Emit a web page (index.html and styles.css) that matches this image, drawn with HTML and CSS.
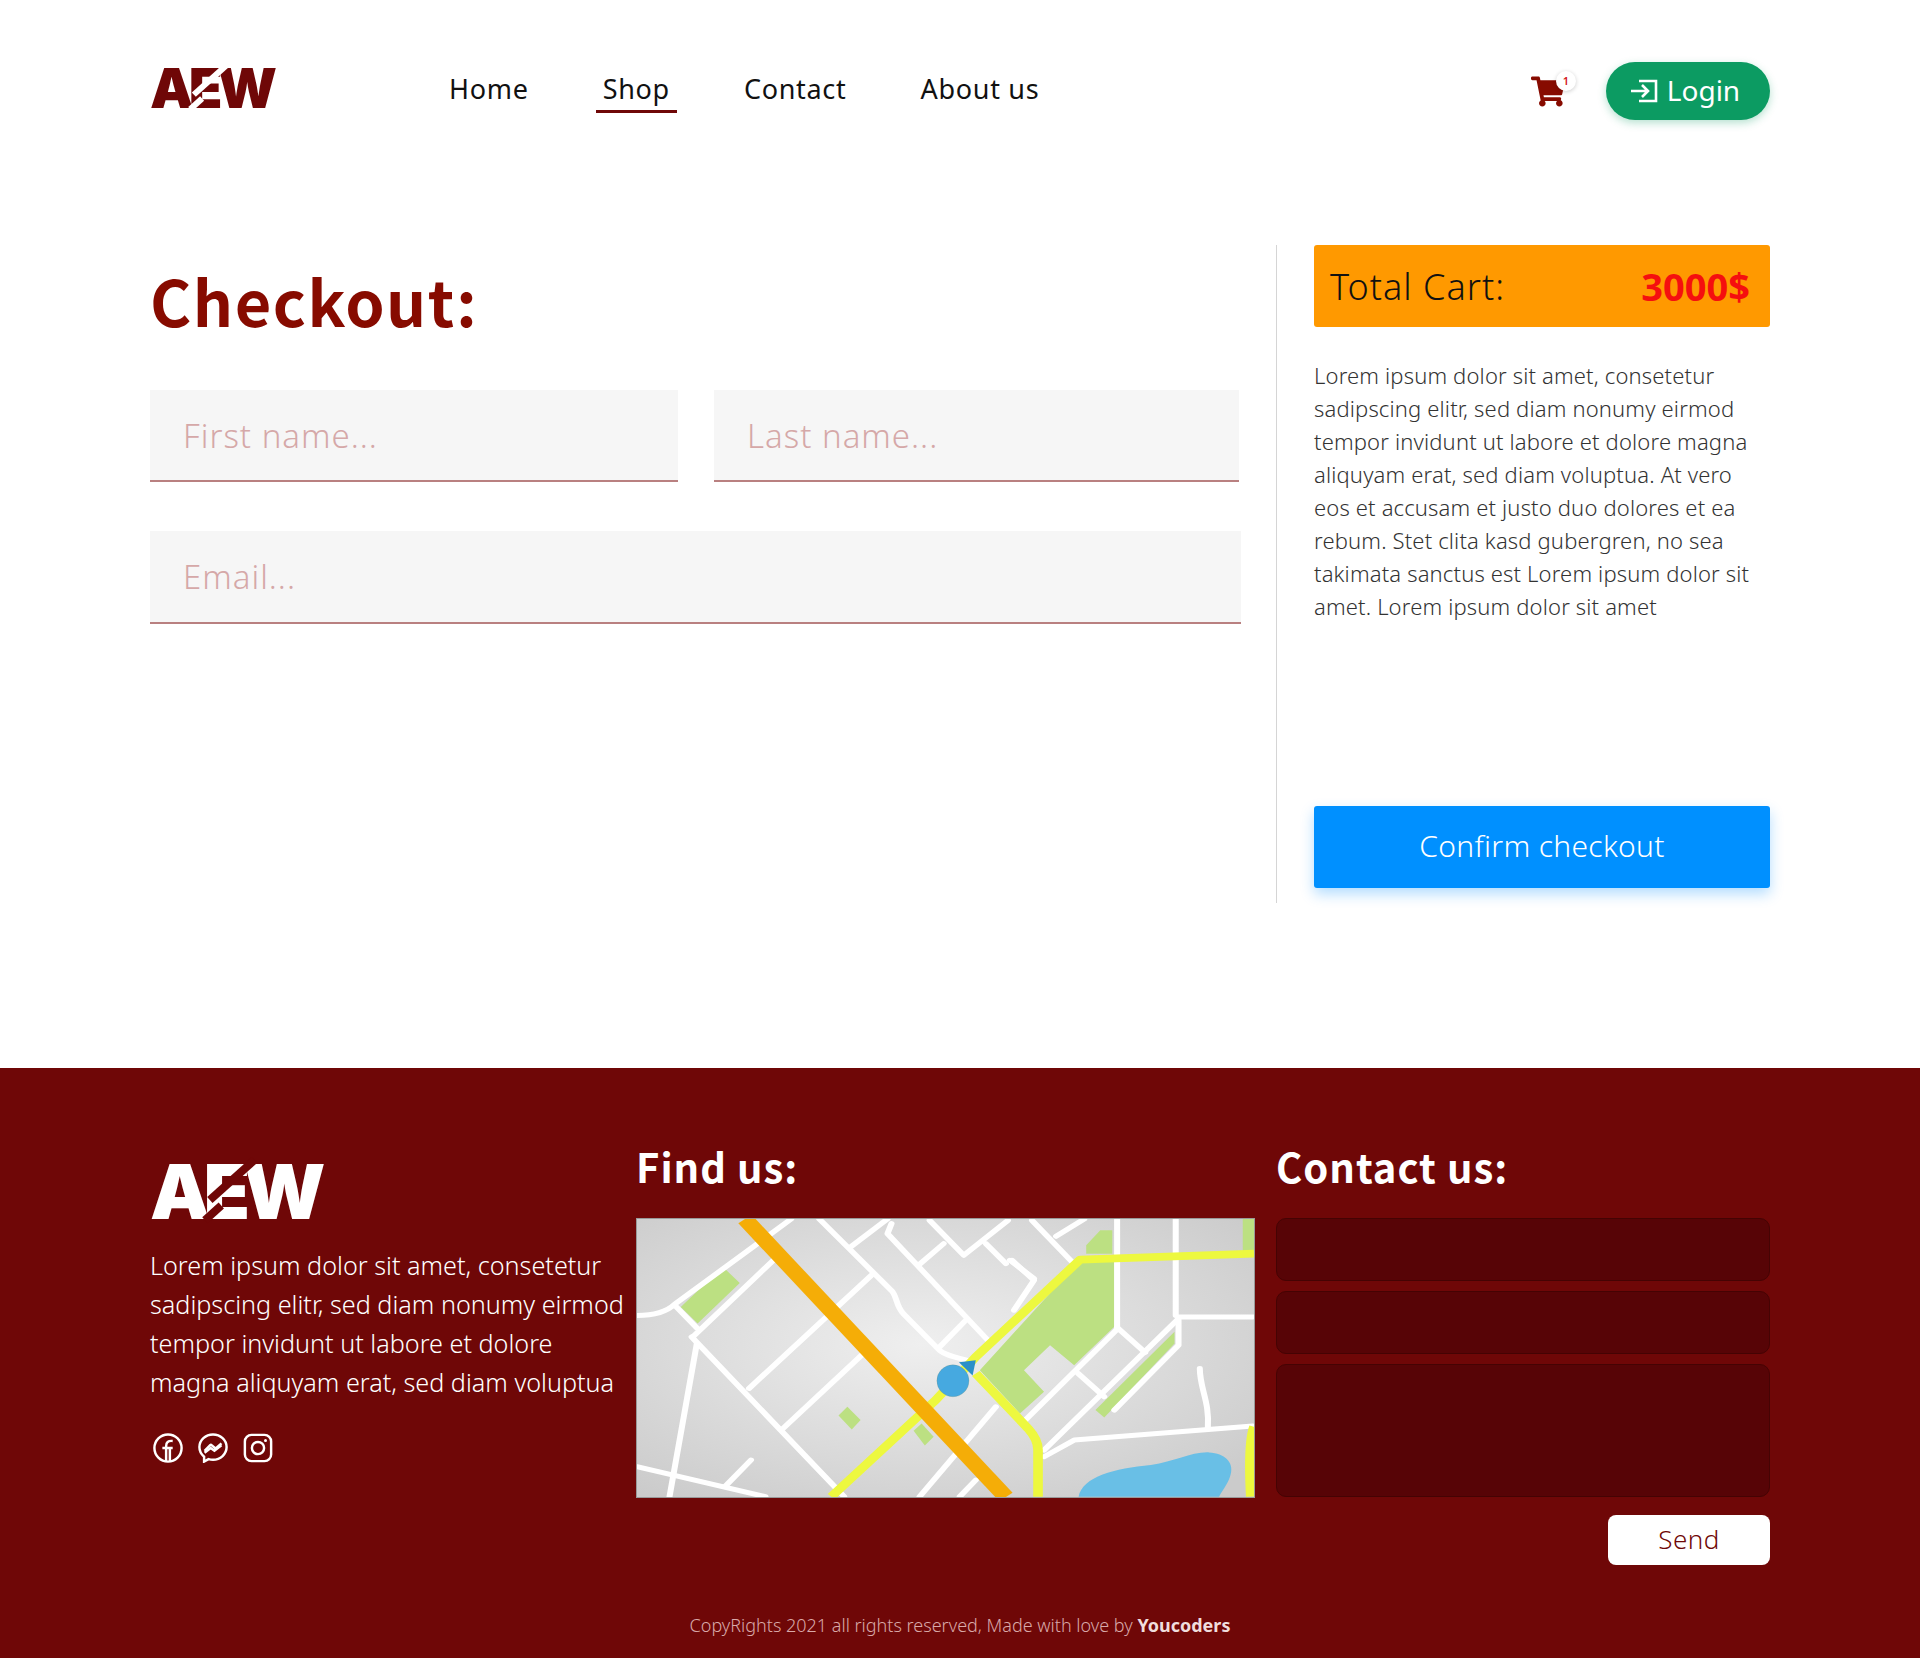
FILE: index.html
```html
<!DOCTYPE html>
<html lang="en">
<head>
    <meta charset="UTF-8">
    <meta name="viewport" content="width=device-width, initial-scale=1.0">
    <title>AEW - Checkout</title>
    <link rel="stylesheet" href="styles.css">
</head>
<body>
    <header class="topbar">
        <a href="#" class="logo logo-small">AEW</a>
        <nav class="nav">
            <a href="#">Home</a>
            <a href="#" class="active">Shop</a>
            <a href="#">Contact</a>
            <a href="#">About us</a>
        </nav>
        <div class="topbar-right">
            <a href="#" class="cart">
                <svg class="cart-icon" viewBox="0 0 576 512"><path d="M528.12 301.319l47.273-208C578.806 78.301 567.391 64 551.99 64H159.208l-9.166-44.81C147.758 8.021 137.93 0 126.529 0H24C10.745 0 0 10.745 0 24v16c0 13.255 10.745 24 24 24h69.883l70.248 343.435C147.325 417.1 136 435.222 136 456c0 30.928 25.072 56 56 56s56-25.072 56-56c0-15.674-6.447-29.835-16.824-40h209.647C430.447 426.165 424 440.326 424 456c0 30.928 25.072 56 56 56s56-25.072 56-56c0-22.172-12.888-41.332-31.579-50.405l5.517-24.276c3.413-15.018-8.002-29.319-23.403-29.319H218.117l-6.545-32h293.145c11.206 0 20.92-7.754 23.403-18.681z"/></svg>
                <span class="cart-badge">1</span>
            </a>
            <a href="#" class="login">
                <svg class="login-icon" viewBox="0 0 28 24"><path d="M1 12h17M12 6l6 6-6 6M9 2h17v20H9" fill="none" stroke="#fff" stroke-width="2.6"/></svg>
                Login
            </a>
        </div>
    </header>

    <main class="checkout">
        <section class="checkout-form">
            <h1>Checkout:</h1>
            <div class="name-row">
                <input type="text" class="field field-first" placeholder="First name...">
                <input type="text" class="field field-last" placeholder="Last name...">
            </div>
            <input type="email" class="field field-email" placeholder="Email...">
        </section>
        <aside class="summary">
            <div class="total">
                <span>Total Cart:</span>
                <strong>3000$</strong>
            </div>
            <p>Lorem ipsum dolor sit amet, consetetur sadipscing elitr, sed diam nonumy eirmod tempor invidunt ut labore et dolore magna aliquyam erat, sed diam voluptua. At vero eos et accusam et justo duo dolores et ea rebum. Stet clita kasd gubergren, no sea takimata sanctus est Lorem ipsum dolor sit amet. Lorem ipsum dolor sit amet</p>
            <button class="confirm">Confirm checkout</button>
        </aside>
    </main>

    <footer class="footer">
        <div class="footer-grid">
            <div class="footer-about">
                <a href="#" class="logo logo-big">AEW</a>
                <p>Lorem ipsum dolor sit amet, consetetur sadipscing elitr, sed diam nonumy eirmod tempor invidunt ut labore et dolore magna aliquyam erat, sed diam voluptua</p>
                <div class="social">
                    <svg viewBox="0 0 32 32"><circle cx="16" cy="16" r="14.5"/><path d="M14 30V14c0-4 2-6 7-5.500M10 16h11M18 30V16"/></svg>
                    <svg viewBox="0 0 32 32"><path d="M16 1.500C8 1.500 1.500 7.500 1.500 15c0 4.200 2 7.800 5 10.300V30.500l4.800-2.600c1.500.4 3 .6 4.700.6 8 0 14.500-6 14.500-13.500S24 1.500 16 1.500z"/><path d="M7 19l6-6c.5-.5 1-.5 1.500 0l3.500 3c.5.400 1 .4 1.500 0L25 11"/><path d="M7 21l6.500-5 4 3 7.500-6"/></svg>
                    <svg viewBox="0 0 32 32"><rect x="2" y="2" width="28" height="28" rx="7"/><circle cx="16" cy="16" r="6.500"/><circle class="dot" cx="24" cy="8" r="1.600"/></svg>
                </div>
            </div>
            <div class="footer-map">
                <h2>Find us:</h2>
                <svg class="map" viewBox="16 26 1537 835" preserveAspectRatio="none">
                    <defs>
                        <radialGradient id="ground" cx="46%" cy="45%" r="70%">
                            <stop offset="0" stop-color="#efefef"/>
                            <stop offset="1" stop-color="#cbcbcb"/>
                        </radialGradient>
                    </defs>
                    <rect x="16" y="26" width="1537" height="835" fill="url(#ground)"/>
                    <g fill="#bce082">
                        <path d="M230 170l42 48-105 122-42-50z"/>
                        <path d="M1170 60h30v70h-65v-25z"/>
                        <path d="M1120 150h85v200l-100 115-60-60-65 75 50 65-60 65-100-130z"/>
                        <path d="M1355 365v35l-175 222-22-22z"/>
                        <path d="M540 590l33 40-22 28-33-42z"/>
                        <path d="M725 640l30 40-22 26-28-44z"/>
                        <path d="M1525 26h28v95h-28z"/>
                    </g>
                    <path d="M1116 860c10-60 90-85 180-95 60-10 100-40 145-38 40 2 60 30 55 60-4 30-20 50-30 73z" fill="#69bfe6"/>
                    <g fill="none" stroke="#fff" stroke-width="15" stroke-linejoin="round" stroke-linecap="round">
                        <path d="M16 316c45 0 75-12 95-35L400 26"/>
                        <path d="M110 285l55 68M155 380L360 145"/>
                        <path d="M152 380l380 480"/>
                        <path d="M165 400L97 860"/>
                        <path d="M16 770l320 90"/>
                        <path d="M300 750l-65 80"/>
                        <path d="M295 535L600 195"/>
                        <path d="M380 655l200-225"/>
                        <path d="M470 26l180 215c15 20 10 45 30 70l90 110c15 15 40 20 70 30"/>
                        <path d="M550 108l90-82M650 40l-10 30 250 320"/>
                        <path d="M720 162l60-62M745 30l85 105 110-105M885 100l50 60M950 150l55 60-50 90"/>
                        <path d="M770 410l65-80"/>
                        <path d="M1000 30l100 125M1060 78l70-52"/>
                        <path d="M945 150l60 55"/>
                        <path d="M1212 26v325M1358 26v290"/>
                        <path d="M1212 352l70 75M1115 490l65 70M1210 360L975 640"/>
                        <path d="M1365 320h185M1365 325L1030 720"/>
                        <path d="M1365 330v75L1205 600"/>
                        <path d="M1418 475c0 60 25 100 20 180"/>
                        <path d="M1030 740l75-50 445-42"/>
                        <path d="M910 590L720 860M860 810l-40 50"/>
                    </g>
                    <g fill="none" stroke="#edf83f" stroke-width="24" stroke-linejoin="round">
                        <path d="M500 860L760 570l100-130 260-292 433-18"/>
                        <path d="M860 490l130 165c15 20 25 40 25 65v140"/>
                        <path d="M1553 650c-12 40-12 120-8 210"/>
                    </g>
                    <path d="M285 26l650 835" fill="none" stroke="#f5ad07" stroke-width="42"/>
                    <path d="M818 456l42-6-8 46z" fill="#2a8fc9"/>
                    <ellipse cx="803" cy="512" rx="40" ry="48" fill="#46a9e0" stroke="#7c8a60" stroke-opacity=".3" stroke-width="2"/>
                </svg>
            </div>
            <form class="footer-contact">
                <h2>Contact us:</h2>
                <input type="text" class="dark-field">
                <input type="text" class="dark-field">
                <textarea class="dark-field dark-area"></textarea>
                <button type="button" class="send">Send</button>
            </form>
        </div>
        <p class="copy">CopyRights 2021 all rights reserved, Made with love by <b>Youcoders</b></p>
    </footer>
</body>
</html>
```

FILE: styles.css
```css
* {
    margin: 0;
    padding: 0;
    box-sizing: border-box;
}

body {
    font-family: "Noto Sans", "Open Sans", sans-serif;
    color: #111;
    background: #fff;
}

a {
    text-decoration: none;
    color: inherit;
}

/* logo */
.logo {
    position: relative;
    display: inline-block;
    font-family: Inter, "Liberation Sans", sans-serif;
    font-weight: 900;
    line-height: 1;
    letter-spacing: -0.09em;
}

.logo::before,
.logo::after {
    content: "";
    position: absolute;
    height: 0.1em;
    transform: rotate(-42deg);
}

.logo::after {
    left: 31%;
    top: 30%;
    width: 36%;
}

.logo::before {
    left: 31%;
    top: 74%;
    width: 13%;
}

.logo-small {
    width: 122px;
    margin-top: -4px;
    margin-right: 170px;
    font-size: 55px;
    color: #6f0707;
}

.logo-small::before,
.logo-small::after {
    background: #fff;
}

.logo-big {
    width: 167px;
    font-size: 76px;
    color: #fff;
}

.logo-big::before,
.logo-big::after {
    background: #6f0707;
}

/* top bar */
.topbar {
    display: flex;
    align-items: center;
    height: 180px;
    padding: 0 150px;
}

.nav {
    display: flex;
    gap: 60px;
    margin-top: 2px;
    font-size: 27px;
    letter-spacing: 0.7px;
}

.nav a {
    padding: 0 7px 3px;
    border-bottom: 3px solid transparent;
}

.nav a.active {
    border-bottom-color: #6f0707;
}

.topbar-right {
    margin-left: auto;
    display: flex;
    align-items: center;
    gap: 28px;
}

.cart {
    position: relative;
    width: 47px;
    height: 34px;
}

.cart-icon {
    display: block;
    width: 34px;
    height: 31px;
    margin-top: 3px;
    fill: #870b00;
}

.cart-badge {
    position: absolute;
    top: -2px;
    right: 2px;
    width: 20px;
    height: 20px;
    border-radius: 50%;
    background: #fff;
    box-shadow: 0 1px 4px rgba(0,0,0,0.2);
    color: #d4151b;
    font-size: 11px;
    font-weight: 600;
    line-height: 20px;
    text-align: center;
}

.login {
    display: flex;
    align-items: center;
    justify-content: center;
    gap: 9px;
    width: 164px;
    height: 58px;
    margin-top: 2px;
    padding: 0 6px 3px 0;
    border-radius: 29px;
    background: #0c9b62;
    box-shadow: 0 3px 8px rgba(12,155,98,0.3);
    color: #fff;
    font-size: 28px;
}

.login-icon {
    width: 28px;
    height: 24px;
    margin-top: 3px;
}

/* checkout */
.checkout {
    display: grid;
    grid-template-columns: 1126px 1fr;
    height: 658px;
    margin-top: 65px;
    padding: 0 150px;
}

.checkout-form h1 {
    margin: 15px 0 50px;
    color: #870b00;
    font-family: "Noto Sans CJK KR", "Noto Sans", sans-serif;
    font-size: 63px;
    font-weight: 700;
    line-height: 80px;
    letter-spacing: 1.5px;
}

.name-row {
    display: flex;
    gap: 36px;
    width: 1089px;
    margin-bottom: 49px;
}

.field {
    display: block;
    height: 92px;
    padding: 0 33px;
    border: 0;
    border-bottom: 2px solid #b98080;
    border-radius: 0;
    background: #f6f6f6;
    font-family: inherit;
    font-size: 33px;
    font-weight: 300;
    letter-spacing: 1px;
    outline: none;
}

.field::placeholder {
    color: #d5a8a8;
    opacity: 1;
}

.field-first {
    width: 528px;
}

.field-last {
    width: 525px;
}

.field-email {
    width: 1091px;
    height: 93px;
}

.summary {
    display: flex;
    flex-direction: column;
    padding-left: 37px;
    border-left: 1px solid #d5d5d5;
}

.total {
    display: flex;
    align-items: center;
    justify-content: space-between;
    height: 82px;
    padding: 0 20px 0 16px;
    border-radius: 3px;
    background: #ff9900;
    font-size: 36px;
    font-weight: 300;
    letter-spacing: 1px;
}

.total strong {
    color: #f50f0f;
    font-size: 38px;
    font-weight: 700;
    letter-spacing: 0;
}

.summary p {
    margin-top: 32px;
    color: #333;
    font-size: 22px;
    font-weight: 300;
    line-height: 33px;
    letter-spacing: 0.16px;
}

.confirm {
    margin-top: auto;
    margin-bottom: 15px;
    height: 82px;
    padding-bottom: 3px;
    border: 0;
    border-radius: 3px;
    background: #0090ff;
    box-shadow: 0 6px 14px rgba(0,144,255,0.3);
    color: #fff;
    font-family: inherit;
    font-size: 30px;
    font-weight: 300;
    letter-spacing: 0.3px;
}

/* footer */
.footer {
    height: 590px;
    margin-top: 165px;
    padding: 72px 150px 0;
    background: #6f0707;
    color: #fff;
}

.footer-grid {
    display: grid;
    grid-template-columns: 486px 640px 1fr;
}

.footer-about {
    padding-top: 13px;
}

.footer-about p {
    width: 480px;
    margin-top: 17px;
    font-size: 25.2px;
    font-weight: 300;
    line-height: 39px;
}

.social {
    display: flex;
    gap: 15px;
    margin-top: 31px;
    padding-left: 3px;
}

.social svg {
    width: 30px;
    height: 30px;
    fill: none;
    stroke: #fff;
    stroke-width: 2.6;
}

.social .dot {
    fill: #fff;
    stroke: none;
}

.footer-grid h2 {
    font-family: "Noto Sans CJK KR", "Noto Sans", sans-serif;
    font-size: 40px;
    font-weight: 700;
    line-height: 52px;
    letter-spacing: 1px;
    margin-bottom: 26px;
}

.map {
    display: block;
    width: 619px;
    height: 280px;
    border: 1px solid #999;
}

.footer-contact {
    display: flex;
    flex-direction: column;
}

.dark-field {
    display: block;
    width: 100%;
    height: 63px;
    margin-bottom: 10px;
    border: 1px solid #450303;
    border-radius: 10px;
    background: #570406;
    outline: none;
    resize: none;
}

.dark-area {
    height: 133px;
    margin-bottom: 18px;
}

.send {
    align-self: flex-end;
    width: 162px;
    height: 50px;
    border: 0;
    border-radius: 8px;
    background: #fff;
    color: #6f0707;
    font-family: inherit;
    font-size: 26px;
    font-weight: 300;
    letter-spacing: 0.5px;
    padding-bottom: 2px;
}

.copy {
    margin-top: 48px;
    color: #d9a9a9;
    font-size: 18px;
    font-weight: 300;
    text-align: center;
}

.copy b {
    color: #f0dddd;
    font-weight: 700;
}
```
